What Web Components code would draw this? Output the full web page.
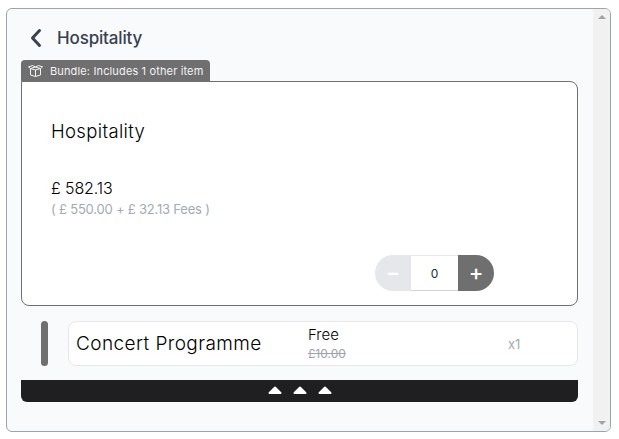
<!DOCTYPE html>
<html>
<head>
<meta charset="utf-8">
<title>Hospitality</title>
<style>
  html, body { margin: 0; background: #fff; }
  body { padding: 8px 0 0 6px; font-family: Inter, "Liberation Sans", sans-serif; }
</style>
</head>
<body>
<ticket-frame>
  <page-header>Hospitality</page-header>
  <bundle-card name="Hospitality" price="£ 582.13" fees="( £ 550.00 + £ 32.13 Fees )" tab="Bundle: Includes 1 other item"></bundle-card>
  <bundle-item name="Concert Programme" price="Free" was="£10.00" qty="x1"></bundle-item>
  <expand-bar></expand-bar>
</ticket-frame>

<script>
class TicketFrame extends HTMLElement {
  connectedCallback() {
    this.attachShadow({ mode: 'open' });
    this.shadowRoot.innerHTML = `
      <style>
        :host {
          display: flex;
          width: 605px;
          height: 424px;
          box-sizing: border-box;
          border: 1px solid #9ca3af;
          border-radius: 6px;
          background: #f9fafb;
          overflow: hidden;
        }
        .content {
          flex: 1;
          min-width: 0;
          padding: 0 15px 0 14px;
          display: flex;
          flex-direction: column;
        }
        .scroll {
          width: 17px;
          background: #f1f1f1;
          display: flex;
          flex-direction: column;
          justify-content: space-between;
          align-items: center;
          padding: 6px 0;
          box-sizing: border-box;
        }
        .up, .down {
          width: 0;
          height: 0;
          border-left: 4px solid transparent;
          border-right: 4px solid transparent;
        }
        .up { border-bottom: 4px solid #a3a3a3; }
        .down { border-top: 4px solid #a3a3a3; }
      </style>
      <div class="content"><slot></slot></div>
      <div class="scroll"><span class="up"></span><span class="down"></span></div>
    `;
  }
}

class PageHeader extends HTMLElement {
  connectedCallback() {
    this.attachShadow({ mode: 'open' });
    this.shadowRoot.innerHTML = `
      <style>
        :host {
          display: flex;
          align-items: center;
          height: 51px;
          box-sizing: border-box;
          padding: 7px 0 0 8px;
          gap: 15px;
          color: #374151;
          font-size: 17px;
          font-weight: 500;
          letter-spacing: -0.15px;
        }
        svg { display: block; }
      </style>
      <svg width="13" height="20" viewBox="0 0 13 20" fill="none" stroke="#374151" stroke-width="3" stroke-linecap="round" stroke-linejoin="round"><path d="M10.5 2.5 L3.5 10 L10.5 17.5"/></svg>
      <slot></slot>
    `;
  }
}

class QtyStepper extends HTMLElement {
  connectedCallback() {
    this.attachShadow({ mode: 'open' });
    this.shadowRoot.innerHTML = `
      <style>
        :host {
          display: flex;
          width: 119px;
          height: 36px;
          border-radius: 18px;
          overflow: hidden;
          font-size: 12px;
        }
        .btn {
          width: 36px;
          box-sizing: border-box;
          padding-bottom: 3px;
          display: flex;
          align-items: center;
          justify-content: center;
          color: #fff;
          font-size: 22px;
          font-weight: 500;
        }
        .minus { background: #e5e7eb; }
        .plus { background: #6f6f6f; }
        .val {
          flex: 1;
          display: flex;
          align-items: center;
          justify-content: center;
          box-sizing: border-box;
          background: #fff;
          color: #1f2937;
          border-top: 1px solid #e5e7eb;
          border-bottom: 1px solid #d1d5db;
        }
      </style>
      <div class="btn minus">−</div>
      <div class="val">0</div>
      <div class="btn plus">+</div>
    `;
  }
}

class BundleCard extends HTMLElement {
  connectedCallback() {
    this.attachShadow({ mode: 'open' });
    this.shadowRoot.innerHTML = `
      <style>
        :host { display: block; }
        .tab {
          display: flex;
          align-items: center;
          gap: 7px;
          width: 189px;
          height: 21px;
          box-sizing: border-box;
          padding-left: 7px;
          background: #6f6f6f;
          color: #f3f4f6;
          border-radius: 4px 4px 0 0;
          font-size: 11px;
          letter-spacing: 0.14px;
          white-space: nowrap;
        }
        .card {
          height: 225px;
          box-sizing: border-box;
          background: #fff;
          border: 1px solid #6f6f6f;
          border-radius: 0 8px 8px 8px;
          padding: 36px 83px 14px 29px;
          display: flex;
          flex-direction: column;
          color: #000;
        }
        .name { font-size: 18.5px; line-height: 26px; letter-spacing: 0.35px; font-weight: 300; }
        .price { font-size: 16px; line-height: 22px; margin-top: 33px; letter-spacing: -0.1px; font-weight: 300; }
        .fees { font-size: 13px; line-height: 20px; color: #a3a9b5; letter-spacing: -0.2px; }
        qty-stepper { margin-top: auto; align-self: flex-end; }
      </style>
      <div class="tab">
        <svg width="15" height="12" viewBox="0 0 15 12" fill="none" stroke="#f3f4f6" stroke-width="1" stroke-linejoin="round"><path d="M2.5 3.5 L7.5 2 L12.5 3.5 L7.5 5 Z M2.5 3.5 L.5 1.8 L4.5 .6 L7.5 2 L10.5 .6 L14.5 1.8 L12.5 3.5 M2.5 4 V10 L7.5 11.5 L12.5 10 V4 M7.5 5 V11.5"/></svg>
        <span>${this.getAttribute('tab')}</span>
      </div>
      <div class="card">
        <div class="name">${this.getAttribute('name')}</div>
        <div class="price">${this.getAttribute('price')}</div>
        <div class="fees">${this.getAttribute('fees')}</div>
        <qty-stepper></qty-stepper>
      </div>
    `;
  }
}

class BundleItem extends HTMLElement {
  connectedCallback() {
    this.attachShadow({ mode: 'open' });
    this.shadowRoot.innerHTML = `
      <style>
        :host {
          display: flex;
          align-items: stretch;
          gap: 20px;
          height: 45px;
          margin: 15px 0 14px;
          padding-left: 20px;
        }
        .handle {
          width: 7px;
          border-radius: 4px;
          background: #6f6f6f;
        }
        .box {
          flex: 1;
          display: grid;
          grid-template-columns: 232px 200px auto;
          align-items: center;
          box-sizing: border-box;
          padding-left: 7px;
          background: #fff;
          border: 1px solid #e5e7eb;
          border-radius: 8px;
        }
        .name { font-size: 19px; color: #000; white-space: nowrap; letter-spacing: 0.42px; font-weight: 300; }
        .price { font-size: 15px; line-height: 20px; color: #000; font-weight: 300; }
        .was { font-size: 12px; line-height: 17px; color: #9ca3af; text-decoration: line-through; }
        .qty { font-size: 13px; color: #a3a9b5; }
      </style>
      <div class="handle"></div>
      <div class="box">
        <div class="name">${this.getAttribute('name')}</div>
        <div>
          <div class="price">${this.getAttribute('price')}</div>
          <div class="was">${this.getAttribute('was')}</div>
        </div>
        <div class="qty">${this.getAttribute('qty')}</div>
      </div>
    `;
  }
}

class ExpandBar extends HTMLElement {
  connectedCallback() {
    this.attachShadow({ mode: 'open' });
    const tri = '<svg width="14" height="9" viewBox="0 0 14 9"><path d="M7 1.5 L12.5 7 H1.5 Z" fill="#fff" stroke="#fff" stroke-width="2" stroke-linejoin="round"/></svg>';
    this.shadowRoot.innerHTML = `
      <style>
        :host {
          display: flex;
          align-items: center;
          justify-content: center;
          gap: 11px;
          height: 22px;
          background: #1f1f21;
          border-radius: 0 0 6px 6px;
        }
        svg { display: block; margin-top: -2px; }
      </style>
      ${tri}${tri}${tri}
    `;
  }
}

customElements.define('qty-stepper', QtyStepper);
customElements.define('ticket-frame', TicketFrame);
customElements.define('page-header', PageHeader);
customElements.define('bundle-card', BundleCard);
customElements.define('bundle-item', BundleItem);
customElements.define('expand-bar', ExpandBar);
</script>
</body>
</html>
